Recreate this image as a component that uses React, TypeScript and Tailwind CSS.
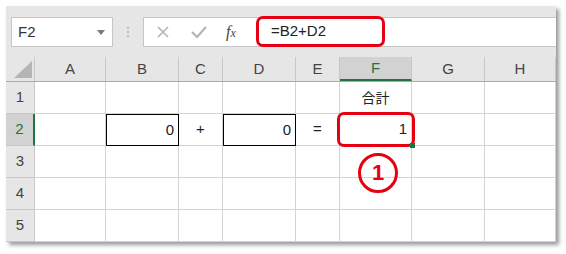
import React from "react";

const cols = [
  { name: "A", w: "w-[71px]" },
  { name: "B", w: "w-[73px]" },
  { name: "C", w: "w-[44px]" },
  { name: "D", w: "w-[73px]" },
  { name: "E", w: "w-[44px]" },
  { name: "F", w: "w-[72px]" },
  { name: "G", w: "w-[73px]" },
  { name: "H", w: "w-[71px]" },
];

type CellProps = {
  w: string;
  children?: React.ReactNode;
  align?: "left" | "center" | "right";
  boxed?: boolean;
};

function Cell({ w, children, align = "center", boxed }: CellProps) {
  return (
    <div
      className={`${w} h-full shrink-0 flex items-center border-r border-b border-[#d4d4d4] ${
        align === "right" ? "justify-end pr-[4px]" : "justify-center"
      } ${boxed ? "border-l border-t border-l-black border-t-black border-r-black border-b-black" : ""}`}
    >
      {children}
    </div>
  );
}

function RowHead({ n, active }: { n: number; active?: boolean }) {
  return (
    <div
      className={`w-[29px] h-full shrink-0 flex items-center justify-center border-b border-[#c8c8c8] text-[15px] ${
        active
          ? "bg-[#d2d2d2] text-[#217346] border-r-2 border-r-[#217346]"
          : "bg-[#e6e6e6] text-[#444] border-r border-r-[#c8c8c8]"
      }`}
    >
      {n}
    </div>
  );
}

export default function App() {
  return (
    <div className="w-[566px] h-[254px] bg-white p-[6px] font-['Liberation_Sans','Noto_Sans_CJK_JP',sans-serif]">
      <div className="w-[550px] h-[236px] bg-white shadow-[3px_3px_4px_rgba(0,0,0,0.4)] flex flex-col">
        {/* toolbar */}
        <div className="h-[51px] bg-[#e6e6e6] flex items-start pt-[11px] pl-[5px] shrink-0">
          <div className="w-[102px] h-[30px] bg-white border border-[#c6c6c6] flex items-center justify-between pl-[6px] pr-[7px]">
            <span className="text-[15px] text-[#333]">F2</span>
            <svg width="8" height="5" viewBox="0 0 8 5">
              <polygon points="0,0 8,0 4,5" fill="#7a7a7a" />
            </svg>
          </div>
          <div className="w-[30px] h-[30px] flex flex-col items-center justify-center gap-[2px]">
            <span className="w-[2px] h-[2px] bg-[#bdbdbd]" />
            <span className="w-[2px] h-[2px] bg-[#bdbdbd]" />
            <span className="w-[2px] h-[2px] bg-[#bdbdbd]" />
          </div>
          <div className="flex-1 h-[30px] bg-white border-y border-l border-[#c6c6c6] flex items-center">
            <div className="w-[112px] h-full flex items-center">
              <svg width="38" height="30" viewBox="0 0 38 30">
                <path d="M14 10 L24 20 M24 10 L14 20" stroke="#b3b3b3" strokeWidth="1.6" />
              </svg>
              <svg width="36" height="30" viewBox="0 0 36 30">
                <path d="M10 15 L15 20 L24 10" stroke="#b3b3b3" strokeWidth="2" fill="none" />
              </svg>
              <span className="ml-[8px] text-[16px] italic text-[#444] font-['Liberation_Serif',serif]">
                f<span className="text-[12px]">x</span>
              </span>
            </div>
            <div className="w-[129px] h-[31px] -mt-[1px] border-[3px] border-[#e60012] rounded-[7px] flex items-center pl-[12px] text-[15px] text-[#222]">
              =B2+D2
            </div>
          </div>
        </div>

        {/* sheet */}
        <div className="relative flex flex-col">
          <div className="h-[25px] flex bg-[#e6e6e6] border-b border-[#ababab]">
            <div className="w-[29px] h-full shrink-0 border-r border-[#c8c8c8] flex items-end justify-end pr-[2px] pb-[3px]">
              <svg width="18" height="17" viewBox="0 0 18 17">
                <polygon points="18,0 18,17 0,17" fill="#b5b5b5" />
              </svg>
            </div>
            {cols.map((c) => (
              <div
                key={c.name}
                className={`${c.w} h-full shrink-0 flex items-center justify-center text-[15px] ${
                  c.name === "F"
                    ? "bg-[#d2d2d2] text-[#217346] border-b-2 border-[#217346] border-r border-r-[#c8c8c8]"
                    : "text-[#444] border-r border-[#c8c8c8]"
                }`}
              >
                {c.name}
              </div>
            ))}
          </div>

          {[1, 2, 3, 4, 5].map((r) => (
            <div key={r} className="h-[32px] flex">
              <RowHead n={r} active={r === 2} />
              {cols.map((c) => {
                let content: React.ReactNode = null;
                let align: "left" | "center" | "right" = "center";
                let boxed = false;
                if (r === 1 && c.name === "F") {
                  content = <span className="text-[14px] text-[#222] font-['Noto_Sans_CJK_JP',sans-serif]">合計</span>;
                }
                if (r === 2) {
                  if (c.name === "B" || c.name === "D") {
                    content = <span className="text-[15px] text-[#222]">0</span>;
                    align = "right";
                    boxed = true;
                  } else if (c.name === "C") {
                    content = <span className="text-[15px] text-[#222]">+</span>;
                  } else if (c.name === "E") {
                    content = <span className="text-[15px] text-[#222]">=</span>;
                  } else if (c.name === "F") {
                    content = <span className="text-[15px] text-[#222]">1</span>;
                    align = "right";
                  }
                }
                return (
                  <Cell key={c.name} w={c.w} align={align} boxed={boxed}>
                    {content}
                  </Cell>
                );
              })}
            </div>
          ))}

          {/* F2 highlight annotation */}
          <div className="absolute left-[331px] top-[55px] w-[78px] h-[35px] border-[3px] border-[#e60012] rounded-[7px]" />
          <div className="absolute left-[404px] top-[86px] w-[5px] h-[5px] bg-[#217346]" />
          <div className="absolute left-[352px] top-[96px] w-[40px] h-[40px] rounded-full border-[3px] border-[#e60012] flex items-center justify-center">
            <span className="text-[22px] font-bold text-[#e60012] leading-none">1</span>
          </div>
        </div>
      </div>
    </div>
  );
}
